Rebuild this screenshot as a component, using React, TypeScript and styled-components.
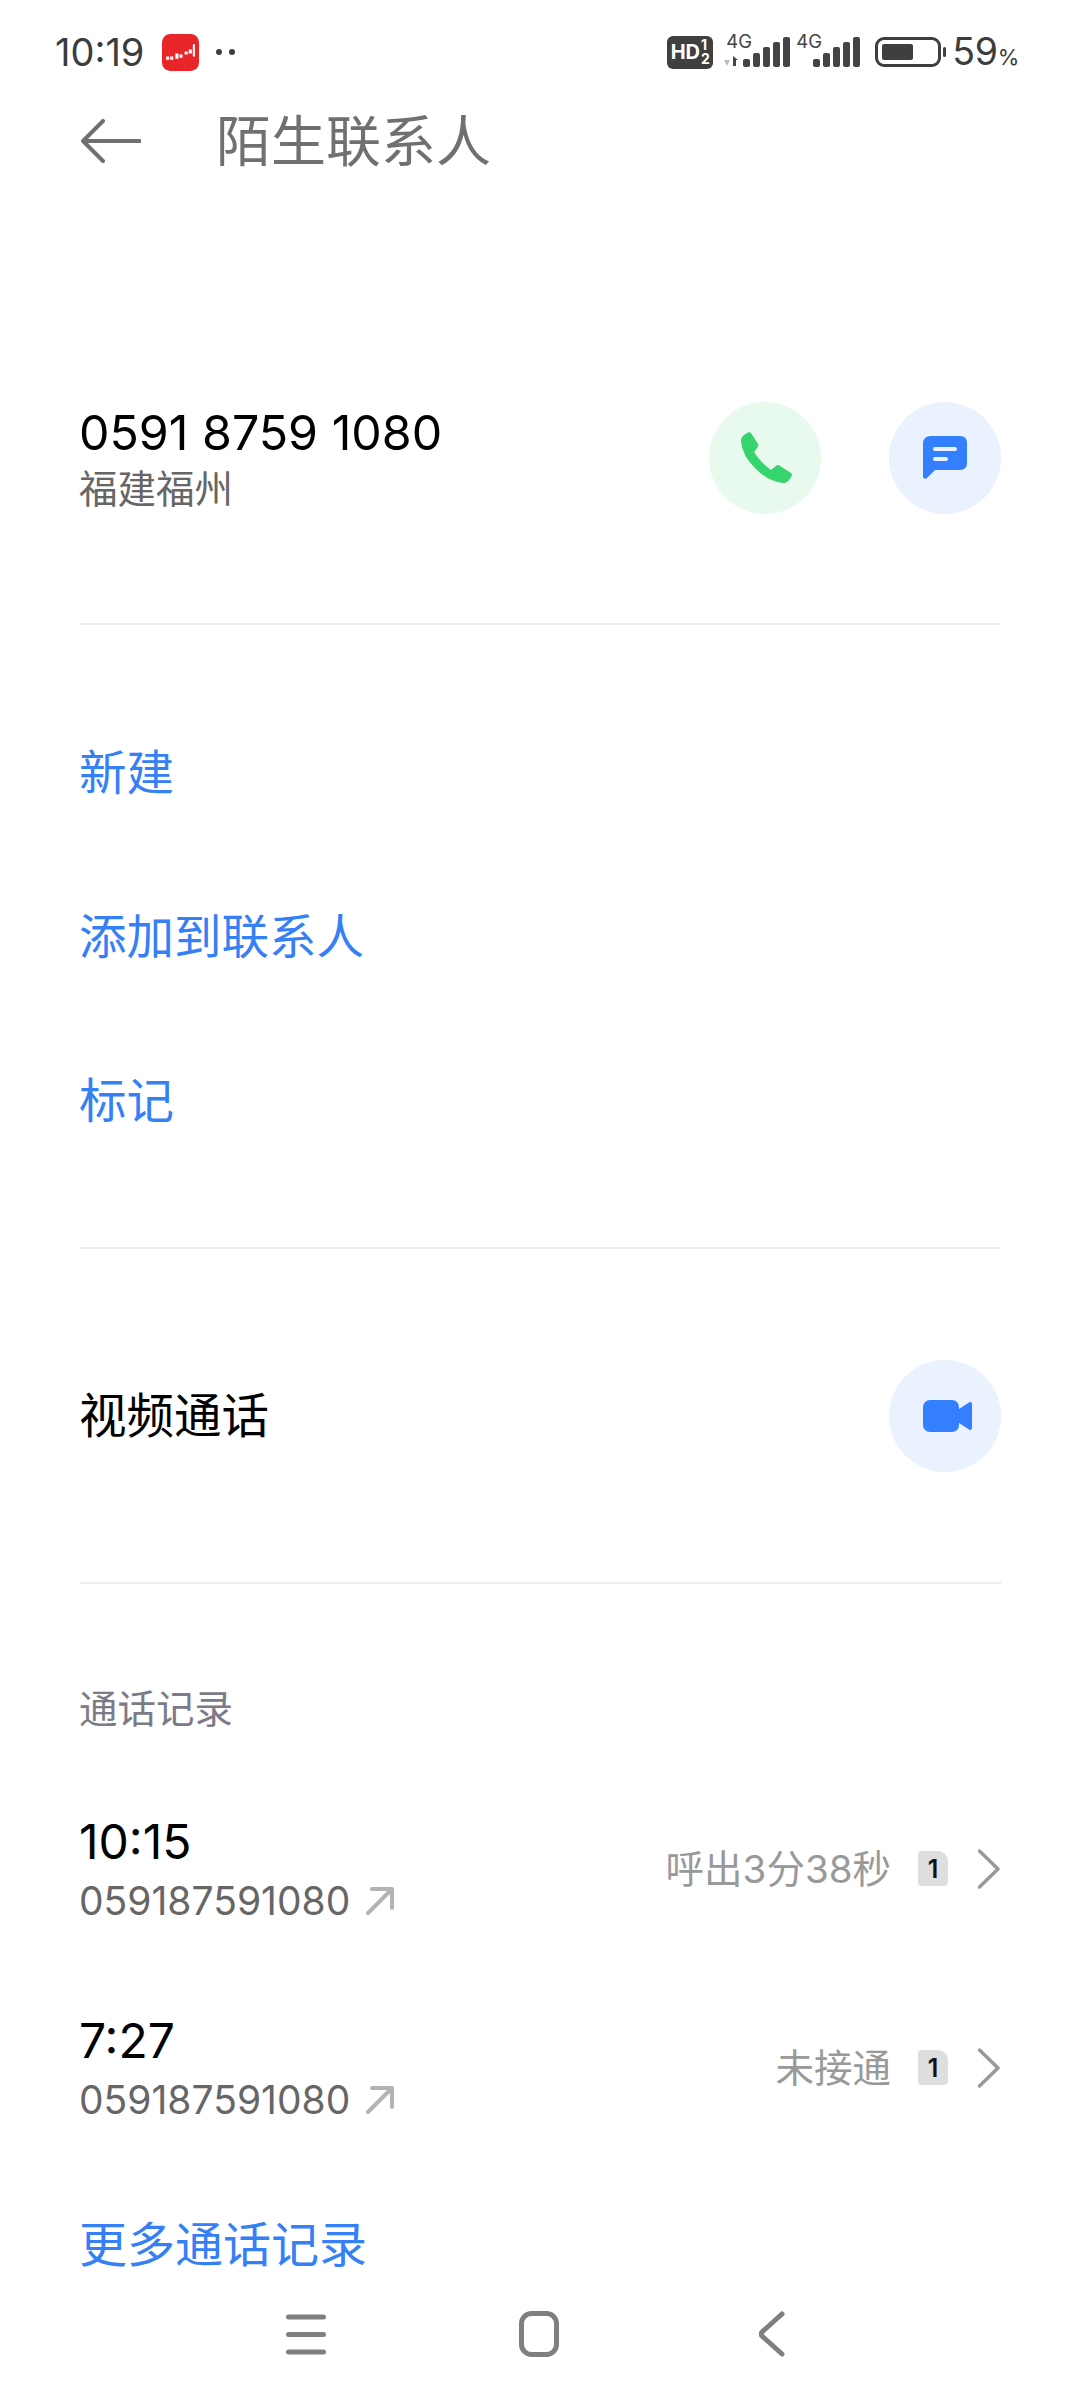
import React from "react";
import styled, { createGlobalStyle } from "styled-components";

const Global = createGlobalStyle`
  html, body { margin: 0; padding: 0; background: #fff; }
  body { font-family: Inter, "Noto Sans CJK SC", sans-serif; }
  #root { width: 1080px; }
`;

const Page = styled.div`
  width: 1080px;
  height: 2400px;
  display: flex;
  flex-direction: column;
  overflow: hidden;
  background: #fff;
`;

const StatusBar = styled.div`
  height: 104px;
  padding: 0 61px 0 55px;
  box-sizing: border-box;
  display: flex;
  align-items: center;
  color: #3c3c3c;
`;
const Clock = styled.span`
  font-size: 38px;
  line-height: 1;
  width: 107px;
`;
const AppIcon = styled.svg`
  width: 37px;
  height: 37px;
  display: block;
`;
const Dots = styled.div`
  display: flex;
  gap: 7px;
  margin-left: 17px;
`;
const Dot = styled.i`
  width: 6px;
  height: 6px;
  border-radius: 50%;
  background: #404040;
`;
const StatusRight = styled.div`
  margin-left: auto;
  display: flex;
  align-items: center;
`;
const HdBadge = styled.div`
  width: 46px;
  height: 33px;
  border-radius: 6px;
  background: #3f3f3f;
  color: #fff;
  display: flex;
  align-items: center;
  justify-content: center;
  font-weight: 700;
  font-size: 20px;
  gap: 1px;
  margin-right: 11px;
`;
const HdFraction = styled.span`
  display: flex;
  flex-direction: column;
  font-size: 14px;
  line-height: 14px;
`;
const Net = styled.div`
  position: relative;
  width: 137px;
  height: 32px;
`;
const NetLabel = styled.span<{ $left: number }>`
  position: absolute;
  left: ${(p) => p.$left}px;
  top: -4px;
  font-size: 18.5px;
  line-height: 18px;
  color: #444;
`;
const Battery = styled.div`
  width: 66px;
  height: 30px;
  border: 3px solid #3f3f3f;
  border-radius: 9px;
  box-sizing: border-box;
  padding: 4px;
  margin-left: 14px;
`;
const BatteryFill = styled.div`
  height: 100%;
  border-radius: 2px;
  background: #3f3f3f;
`;
const BatteryTip = styled.i`
  width: 3px;
  height: 10px;
  border-radius: 2px;
  background: #3f3f3f;
  margin: 0 6px 0 2px;
`;
const Percent = styled.span`
  font-size: 37.5px;
  line-height: 1;
  color: #3c3c3c;
  display: flex;
  align-items: baseline;
  letter-spacing: -0.3px;
`;
const PercentSign = styled.small`
  font-size: 22px;
`;

const Header = styled.div`
  height: 74px;
  padding-left: 81px;
  display: flex;
  align-items: center;
  gap: 75px;
`;
const BackArrow = styled.svg`
  width: 60px;
  height: 44px;
  display: block;
`;
const Title = styled.h1`
  margin: 0;
  font-size: 55px;
  font-weight: 400;
  color: #707070;
  line-height: 74px;
`;

const Section = styled.div<{ $height: number }>`
  height: ${(p) => p.$height}px;
  margin: 0 79px 0 80px;
  box-sizing: border-box;
  border-bottom: 2px solid #ececec;
  display: flex;
  align-items: center;
`;
const CallerRow = styled(Section)`
  padding-top: 169px;
  padding-bottom: 55px;
`;
const Caller = styled.div`
  flex: 1;
  display: flex;
  flex-direction: column;
  margin-left: -1px;
`;
const PhoneNumber = styled.div`
  font-size: 48.3px;
  line-height: 62px;
  color: #000;
`;
const Region = styled.div`
  font-size: 38.5px;
  line-height: 50px;
  color: #666;
`;
const RoundButton = styled.div<{ $bg: string; $nudge?: number }>`
  width: 112px;
  height: 112px;
  border-radius: 50%;
  background: ${(p) => p.$bg};
  display: flex;
  align-items: center;
  justify-content: center;
  padding-left: ${(p) => p.$nudge ?? 0}px;
  box-sizing: border-box;
  margin-left: 68px;
`;
const Actions = styled(Section)`
  flex-direction: column;
  align-items: flex-start;
  justify-content: center;
  gap: 102px;
  padding-top: 2px;
`;
const LinkText = styled.div`
  font-size: 47.5px;
  line-height: 62px;
  margin-left: -1px;
  color: #3580f5;
`;
const VideoLabel = styled.div`
  flex: 1;
  font-size: 47.5px;
  line-height: 62px;
  margin-left: -1px;
  color: #000;
`;
const VideoSection = styled(Section)``;

const History = styled.div`
  padding: 100px 80px 0;
  display: flex;
  flex-direction: column;
`;
const HistoryTitle = styled.div`
  font-size: 38.5px;
  line-height: 50px;
  margin-left: -1px;
  color: #7b7b88;
`;
const CallRow = styled.div`
  height: 199px;
  display: flex;
  align-items: center;
`;
const FirstCallRow = styled(CallRow)`
  margin-top: 35px;
`;
const CallLeft = styled.div`
  flex: 1;
  margin-left: -1px;
`;
const CallTime = styled.div`
  font-size: 48px;
  line-height: 62px;
  padding-top: 1px;
  color: #000;
`;
const CallNumber = styled.div`
  display: flex;
  align-items: center;
  gap: 15px;
  font-size: 39px;
  line-height: 52px;
  padding-top: 2px;
  color: #666;
`;
const CallStatus = styled.div`
  font-size: 38.5px;
  line-height: 50px;
  color: #999;
`;
const SimBadge = styled.div`
  width: 30px;
  height: 35px;
  margin: 0 30px 0 27px;
  border-radius: 4px 10px 4px 4px;
  background: #dedede;
  color: #111;
  font-size: 25px;
  font-weight: 600;
  display: flex;
  align-items: center;
  justify-content: center;
`;
const MoreLink = styled(LinkText)`
  font-size: 48px;
  margin-top: 47px;
`;

const NavBar = styled.div`
  margin-top: auto;
  height: 120px;
  display: flex;
  align-items: center;
  padding: 0 2px 12px 0;
  box-sizing: border-box;
  justify-content: center;
`;
const NavSlot = styled.div`
  width: 233px;
  display: flex;
  justify-content: center;
`;

const Phone = () => (
  <svg width="52" height="52" viewBox="0 0 52 52">
    <path fill="#36d46c" d="M6 1Q8-.5 10 1L17 12Q18 14 16 16L13 20Q19 30 30 38L35 34Q37 32 39 34L50 41Q52 43 50 45Q47 51 42 51Q28 50 15 37Q1 24 0 9Q0 4 6 1Z" />
  </svg>
);
const Message = () => (
  <svg width="44" height="44" viewBox="0 0 44 44">
    <path fill="#337ffe" d="M8 0H37Q44 0 44 7V27Q44 34 37 34H12L4 42Q1 44 0 41V8Q0 0 8 0Z" />
    <rect x="10" y="11" width="24" height="4" rx="2" fill="#e9f2fe" />
    <rect x="10" y="21" width="15" height="4" rx="2" fill="#e9f2fe" />
  </svg>
);
const Video = () => (
  <svg width="50" height="32" viewBox="0 0 50 32">
    <rect width="36" height="32" rx="7" fill="#337ffe" />
    <path fill="#337ffe" d="M36 9L46 2.5Q49 1 49 4V27.500Q49 31 46 29.500L36 23Z" />
  </svg>
);
const Chevron = () => (
  <svg width="22" height="40" viewBox="0 0 22 40">
    <path d="M1.500 2L20 20L1.500 38" fill="none" stroke="#999" strokeWidth="3.500" strokeLinecap="round" strokeLinejoin="round" />
  </svg>
);
const Outgoing = () => (
  <svg width="30" height="30" viewBox="0 0 30 30">
    <path d="M3 27L27 3M7 3H27V22" fill="none" stroke="#b3b3b3" strokeWidth="4" strokeLinecap="round" strokeLinejoin="round" />
  </svg>
);

const Signal = ({ x }: { x: number }) => {
  const heights = [8, 14, 20, 25, 30];
  return (
    <>
      {heights.map((h, i) => (
        <rect key={i} x={x + i * 10} y={31 - h} width={7} height={h} rx={2} fill="#444" />
      ))}
    </>
  );
};

const Calls = [
  { time: "10:15", status: "呼出3分38秒" },
  { time: "7:27", status: "未接通" },
];

export default function App() {
  return (
    <Page>
      <Global />
      <StatusBar>
        <Clock>10:19</Clock>
        <AppIcon viewBox="0 0 36 36">
          <rect width="36" height="36" rx="8" fill="#e8262a" />
          <path d="M4 22h3v3h-3zM8 22h3v3h-3zM13 19h3v5h-3zM17 20h3v3h-3zM22 17h3v3h-3zM26 15h3v4h-3zM30 10h2v12h-2z" fill="#fff" />
        </AppIcon>
        <Dots>
          <Dot />
          <Dot />
        </Dots>
        <StatusRight>
          <HdBadge>
            HD
            <HdFraction>
              <span>1</span>
              <span>2</span>
            </HdFraction>
          </HdBadge>
          <Net>
            <NetLabel $left={2}>4G</NetLabel>
            <NetLabel $left={72}>4G</NetLabel>
            <svg width="137" height="32" viewBox="0 0 137 32">
              <path d="M0 24h6l-3 6z" fill="#bbb" />
              <path d="M9 20l5 4h-2v6h-3z" fill="#444" />
              <Signal x={19} />
              <Signal x={89} />
            </svg>
          </Net>
          <Battery>
            <BatteryFill style={{ width: "59%" }} />
          </Battery>
          <BatteryTip />
          <Percent>
            59<PercentSign>%</PercentSign>
          </Percent>
        </StatusRight>
      </StatusBar>
      <Header>
        <BackArrow viewBox="0 0 60 44">
          <path d="M59 22H2M22 2L2 22L22 42" fill="none" stroke="#707070" strokeWidth="4" strokeLinecap="round" strokeLinejoin="round" />
        </BackArrow>
        <Title>陌生联系人</Title>
      </Header>
      <CallerRow $height={447}>
        <Caller>
          <PhoneNumber>0591 8759 1080</PhoneNumber>
          <Region>福建福州</Region>
        </Caller>
        <RoundButton $bg="#e8f9ee" $nudge={4}>
          <Phone />
        </RoundButton>
        <RoundButton $bg="#e9f2fe">
          <Message />
        </RoundButton>
      </CallerRow>
      <Actions $height={624}>
        <LinkText>新建</LinkText>
        <LinkText>添加到联系人</LinkText>
        <LinkText>标记</LinkText>
      </Actions>
      <VideoSection $height={335}>
        <VideoLabel>视频通话</VideoLabel>
        <RoundButton $bg="#e9f2fe" $nudge={5}>
          <Video />
        </RoundButton>
      </VideoSection>
      <History>
        <HistoryTitle>通话记录</HistoryTitle>
        {Calls.map((c, i) => {
          const Row = i === 0 ? FirstCallRow : CallRow;
          return (
            <Row key={c.time}>
              <CallLeft>
                <CallTime>{c.time}</CallTime>
                <CallNumber>
                  059187591080
                  <Outgoing />
                </CallNumber>
              </CallLeft>
              <CallStatus>{c.status}</CallStatus>
              <SimBadge>1</SimBadge>
              <Chevron />
            </Row>
          );
        })}
        <MoreLink>更多通话记录</MoreLink>
      </History>
      <NavBar>
        <NavSlot>
          <svg width="40" height="41" viewBox="0 0 40 41">
            <path d="M2.500 3H37.500M2.500 20.500H37.500M2.500 38H37.500" stroke="#7f7f7f" strokeWidth="5" strokeLinecap="round" fill="none" />
          </svg>
        </NavSlot>
        <NavSlot>
          <svg width="40" height="46" viewBox="0 0 40 46">
            <rect x="2.500" y="2.500" width="35" height="41" rx="10" fill="none" stroke="#7f7f7f" strokeWidth="5" />
          </svg>
        </NavSlot>
        <NavSlot>
          <svg width="26" height="46" viewBox="0 0 26 46">
            <path d="M23 3L3 21Q1.500 23 3 25L23 43" fill="none" stroke="#7f7f7f" strokeWidth="5" strokeLinecap="round" strokeLinejoin="round" />
          </svg>
        </NavSlot>
      </NavBar>
    </Page>
  );
}
